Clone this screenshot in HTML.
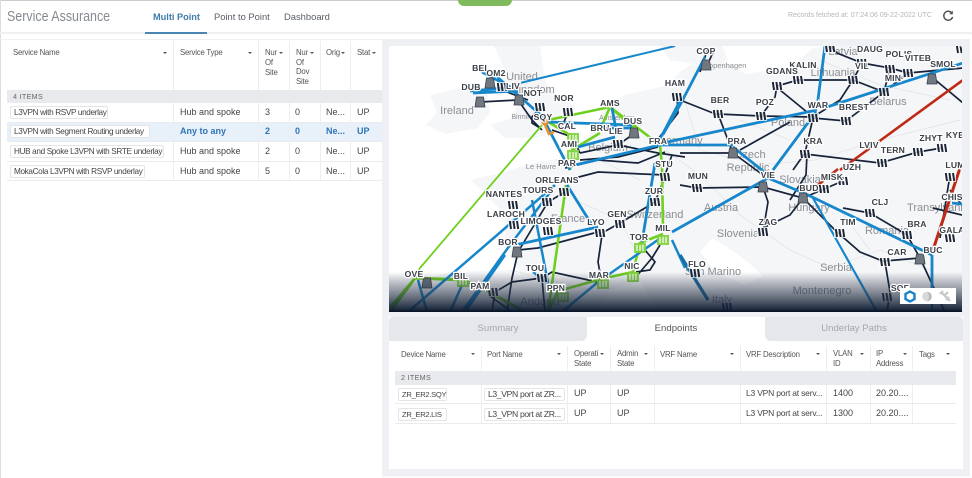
<!DOCTYPE html>
<html><head><meta charset="utf-8"><style>
html,body{margin:0;padding:0;background:#fff}
#p{position:relative;width:972px;height:478px;overflow:hidden;background:#fff;font-family:"Liberation Sans",sans-serif;color:#444;filter:blur(.35px)}
#p div{position:absolute;box-sizing:border-box}
.t{white-space:nowrap;font-size:7.8px;letter-spacing:-.2px;line-height:10px;color:#555}
.c{white-space:nowrap;font-size:9px;line-height:12px;color:#444}
.v{width:1px;background:#eceef0}
.h{height:1px;background:#e9ebee}
.pl{border:1px solid #e4e5e7;border-radius:2px;background:#fff;height:13px;font-size:8.2px;letter-spacing:-.35px;line-height:11px;padding-left:3px;white-space:nowrap;color:#444}
.a{width:0;height:0;border-left:2.5px solid transparent;border-right:2.5px solid transparent;border-top:2.5px solid #555}
.b{color:#2f75b5;font-weight:bold}
svg text{font-family:"Liberation Sans",sans-serif}
.l text{font-size:8.6px;font-weight:bold;fill:#3a3f47;stroke:#fff;stroke-width:2.4px;paint-order:stroke;text-anchor:middle;letter-spacing:.2px}
.g text{font-size:11px;fill:#8a8d92;text-anchor:middle}
</style></head><body><div id="p">
<div style="left:0;top:0;width:972px;height:1px;background:#ccc"></div>
<div style="left:0;top:0;width:1px;height:478px;background:#ddd"></div>
<div style="left:458px;top:0;width:54px;height:6px;background:#7fbb5c;border-radius:0 0 6px 6px"></div>
<div style="left:7px;top:7px;font-size:15px;line-height:20px;color:#868b91;white-space:nowrap;transform:scaleX(.83);transform-origin:0 0">Service Assurance</div>
<div style="left:153px;top:11px;font-size:9.2px;line-height:12px;font-weight:bold;color:#3f7cac;white-space:nowrap">Multi Point</div>
<div style="left:214px;top:11px;font-size:9.4px;line-height:12px;color:#5a6068;white-space:nowrap">Point to Point</div>
<div style="left:284px;top:11px;font-size:9.4px;line-height:12px;color:#5a6068;white-space:nowrap">Dashboard</div>
<div style="left:788px;top:11px;font-size:7px;line-height:10px;color:#b3b6ba;white-space:nowrap">Records fetched at: 07:24:06 09-22-2022 UTC</div>
<svg style="position:absolute;left:941px;top:9px" width="14" height="14" viewBox="0 0 14 14"><path d="M11 4.2A4.5 4.5 0 1 0 11.6 8" fill="none" stroke="#4a4f55" stroke-width="1.4"/><path d="M11.8 1.6V5.2H8.2Z" fill="#4a4f55"/></svg>
<div style="left:0;top:32px;width:972px;height:2px;background:#eff0f2"></div>
<div style="left:145px;top:32px;width:62px;height:1.5px;background:#4a86b4"></div>
<div style="left:0;top:39px;width:382px;height:1px;background:#eef0f3"></div>

<!-- left table -->
<div class="t" style="left:13px;top:48px">Service Name</div>
<div class="t" style="left:180px;top:48px">Service Type</div>
<div class="t" style="left:265px;top:48px;line-height:10px">Nur<br>Of<br>Site</div>
<div class="t" style="left:296px;top:48px;line-height:9.7px">Nur<br>Of<br>Dov<br>Site</div>
<div class="t" style="left:326px;top:48px">Orig</div>
<div class="t" style="left:357px;top:48px">Stat</div>
<div class="a" style="left:163px;top:52px"></div><div class="a" style="left:248px;top:52px"></div>
<div class="a" style="left:279px;top:52px"></div><div class="a" style="left:310px;top:52px"></div>
<div class="a" style="left:341px;top:52px"></div><div class="a" style="left:372px;top:52px"></div>
<div style="left:7px;top:122px;width:375px;height:20px;background:#e8f1fa"></div>
<div class="h" style="left:7px;top:122px;width:375px"></div><div class="h" style="left:7px;top:141px;width:375px"></div><div class="h" style="left:7px;top:161px;width:375px"></div><div class="h" style="left:7px;top:180px;width:375px"></div>
<div class="v" style="left:173px;top:41px;height:140px"></div><div class="v" style="left:258px;top:41px;height:140px"></div><div class="v" style="left:289px;top:41px;height:140px"></div><div class="v" style="left:320px;top:41px;height:140px"></div><div class="v" style="left:350px;top:41px;height:140px"></div>
<div style="left:7px;top:90px;width:375px;height:13px;background:#e9eaed"></div>
<div style="left:13px;top:92px;font-size:7.2px;line-height:10px;color:#666;letter-spacing:.3px">4 ITEMS</div>
<div class="pl" style="left:10px;top:106px;width:98px">L3VPN with RSVP underlay</div>
<div class="pl" style="left:10px;top:125px;width:140px">L3VPN with Segment Routing underlay</div>
<div class="pl" style="left:10px;top:145px;width:154px">HUB and Spoke L3VPN with SRTE underlay</div>
<div class="pl" style="left:10px;top:165px;width:135px">MokaCola L3VPN with RSVP underlay</div>
<div class="c" style="left:180px;top:106px">Hub and spoke</div><div class="c" style="left:265px;top:106px">3</div><div class="c" style="left:295px;top:106px">0</div><div class="c" style="left:326px;top:106px">Ne...</div><div class="c" style="left:357px;top:106px">UP</div>
<div class="c b" style="left:180px;top:125px">Any to any</div><div class="c b" style="left:265px;top:125px">2</div><div class="c b" style="left:295px;top:125px">0</div><div class="c b" style="left:326px;top:125px">Ne...</div><div class="c b" style="left:357px;top:125px">UP</div>
<div class="c" style="left:180px;top:145px">Hub and spoke</div><div class="c" style="left:265px;top:145px">2</div><div class="c" style="left:295px;top:145px">0</div><div class="c" style="left:326px;top:145px">Ne...</div><div class="c" style="left:357px;top:145px">UP</div>
<div class="c" style="left:180px;top:165px">Hub and spoke</div><div class="c" style="left:265px;top:165px">5</div><div class="c" style="left:295px;top:165px">0</div><div class="c" style="left:326px;top:165px">Ne...</div><div class="c" style="left:357px;top:165px">UP</div>

<!-- right panel -->
<div style="left:382px;top:39px;width:590px;height:439px;background:#eff0f4"></div>
<div style="left:970px;top:39px;width:2px;height:439px;background:#fff"></div>
<div style="left:382px;top:476px;width:590px;height:2px;background:#fafafa"></div>

<svg style="position:absolute;left:0;top:0" width="972" height="478" viewBox="0 0 972 478">
<defs>
<clipPath id="m"><path d="M389 49Q389 46 392 46H959Q962 46 962 49V312H389Z"/></clipPath>
<linearGradient id="fd" x1="0" y1="0" x2="0" y2="1"><stop offset="0" stop-color="#0c1a30" stop-opacity="0"/><stop offset=".45" stop-color="#2a3548" stop-opacity=".5"/><stop offset="1" stop-color="#0b1a30" stop-opacity="1"/></linearGradient>
<g id="n"><rect x="-6" y="-5" width="12" height="10" fill="#fff" opacity=".75"/><path d="M-4.2 -4L-3 4M-.6 -4L.6 4M3 -4L4.2 4" stroke="#1d2636" stroke-width="2" fill="none"/></g>
<g id="gr"><path d="M-3.5 -5H3.5L5 5H-5Z" fill="#70777f" stroke="#39414c" stroke-width=".8"/></g>
<g id="gn"><rect x="-6" y="-5" width="12" height="10" fill="#7ed13a" opacity=".9"/><path d="M-3 -3V3M0 -3V3M3 -3V3" stroke="#fff" stroke-width="1.2"/></g>
</defs>
<g clip-path="url(#m)">
<rect x="389" y="46" width="573" height="266" fill="#fff"/>
<g fill="#f5f6f8">
<path d="M430 95L470 86L487 92L490 112L478 128L445 134L426 125L437 112Z"/>
<path d="M494 46L540 46L545 80L552 92L575 106L572 122L556 133L535 138L505 138L490 125L512 118L520 100L500 90L505 70Z"/>
<path d="M960 46L962 46V312H389V312L404 286L450 272L510 270L520 275L505 240L505 215L482 190L470 180L505 172L525 165L560 158L590 135L605 108L625 95L665 86L680 72L690 65L722 60L745 74L790 68L805 55L815 46H960Z"/>
<path d="M660 46H722L728 60L700 65L670 60Z"/>
</g>
<path d="M712 238Q738 252 763 276L745 285L715 272L700 252Z" fill="#fff"/>
<path d="M600 312L610 290L640 282L660 312Z" fill="#fff"/>
<path d="M800 50L830 46H724L728 60L780 62Z" fill="#fff"/>
<g fill="none" stroke="#e2e4e8" stroke-width=".8">
<path d="M665 150L700 175L740 215L790 250L830 268L880 250L930 270M680 85L700 150L760 165L815 160L880 140L960 120M820 60L880 85L950 100M840 210L870 250M575 200L620 220L640 260M510 270L590 290M740 120L790 140M600 160L640 180"/>
</g>
<g class="g">
<text x="457" y="114" style="font-size:11px">Ireland</text><text x="522" y="80" style="font-size:11px">United</text><text x="533" y="93" style="font-size:11px">Kingdom</text>
<text x="843" y="55" style="font-size:11px">Latvia</text><text x="833" y="76" style="font-size:11px">Lithuania</text><text x="888" y="105" style="font-size:11px">Belarus</text><text x="788" y="126" style="font-size:11px">Poland</text>
<text x="750" y="158" style="font-size:11px">Czech</text><text x="748" y="171" style="font-size:11px">Republic</text><text x="721" y="211" style="font-size:11px">Austria</text><text x="738" y="237" style="font-size:11px">Slovenia</text><text x="713" y="275" style="font-size:11px">San Marino</text><text x="836" y="271" style="font-size:11px">Serbia</text><text x="822" y="294" style="font-size:11px">Montenegro</text><text x="809" y="211" style="font-size:11px">Hungary</text><text x="800" y="183" style="font-size:11px">Slovakia</text><text x="887" y="234" style="font-size:11px">Romania</text><text x="938" y="211" style="font-size:11px">Transylvania</text>
<text x="608" y="151" style="font-size:11px">Belgium</text><text x="568" y="222" style="font-size:11px">France</text><text x="655" y="218" style="font-size:11px">Switzerland</text><text x="540" y="305" style="font-size:11px">Andorra</text><text x="680" y="144" style="font-size:11px">Germany</text><text x="722" y="303" style="font-size:11px">Italy</text>
<text x="530" y="119" style="font-size:7px">Birmingham</text><text x="541" y="169" style="font-size:7.5px">Le Havre</text><text x="725" y="68" style="font-size:7.5px">Copenhagen</text><text x="617" y="120" style="font-size:7px">Amsterdam</text>
</g>
<!-- navy links -->
<g fill="none" stroke="#16233a" stroke-width="1.7">
<path d="M718 114L761 116L813 117M777 86L798 80L853 80L884 92L908 73L963 68M777 86L775 97L761 116M780 90L813 117M853 80L840 100L813 117M813 118L846 121L884 92M884 92L890 68L862 63L837 53L830 46M853 80L862 63M908 73L890 68M933 78L963 103M813 118L805 153L793 170M805 154L880 163L918 152L942 148M807 154L806 175L790 200M790 122L740 150M718 114L733 153M718 115L680 100M680 153L733 153M733 153L763 175"/>
<path d="M680 185L697 188L763 187L803 198L837 232L860 252L885 262L890 292L887 312M803 198L790 215L763 228M763 187L768 202L763 232M824 189L803 198M843 181L824 189M843 208L870 213L907 235L920 258M920 258L885 261M920 258L945 312M950 175L940 238M933 208L962 215M950 190L962 205"/>
<path d="M518 252L548 202L565 192M518 252L512 278L507 312M518 250L538 248L598 232M602 235L598 262L602 283M602 233L620 223L655 202L665 177M542 278L552 272L602 283M542 278L545 312M542 278L512 282L495 292L492 312M635 278L652 258L660 245M636 272L650 270L655 262L645 250"/>
<path d="M575 178L598 172L665 175L672 155M518 100L480 102M518 100L532 120L542 130M507 92L528 100M540 108L532 117L532 123L540 128M568 112L562 127M552 130L572 137L580 153M580 153L618 145L635 133M580 160L618 157L658 147M677 97L678 113L655 143M618 145L658 153L685 157M565 168L598 160L638 163L665 152M708 48L700 72M715 48L705 70M490 296L512 312"/>
</g>
<!-- green links -->
<g fill="none" stroke="#6fd01f" stroke-linejoin="round">
<path stroke-width="1.8" d="M542 125L420 268L413 280L390 307"/>
<path stroke-width="2.6" d="M548 120L610 107L660 145L662 165L663 228M610 107L600 130M545 120L570 135L572 150L570 170M566 185L548 312M663 234L640 243L633 272L605 278L558 291L548 312M572 150L600 133M610 107L634 128"/>
<path stroke-width="3" d="M390 312L415 278L463 280L482 288L525 312"/>
</g>
<!-- blue links -->
<g fill="none" stroke="#1787cc" stroke-width="2.8">
<path stroke-width="2" d="M520 83L675 46"/>
<path d="M496 76L543 117M482 72L512 88M470 91L517 87M473 93L518 91M545 122L570 170M548 122L632 125M612 108L617 135M578 147L615 137M600 128L632 128M575 165L660 145"/>
<path d="M658 144L817 110M658 145L733 145M682 97L658 143M705 57L680 105L658 143M733 147L768 175M816 112L773 170M825 46L817 107M827 107L963 63M655 163L642 242M672 232L768 178M768 178L808 195L932 255M932 255V290"/>
<path stroke-width="2.2" d="M813 198L877 312M932 255V312"/>
<path d="M952 203L962 204M515 245L598 227M567 185L592 225"/>
<path stroke-width="2.5" d="M555 185L408 312M552 190L510 245L462 312M505 255L465 312M533 272L548 283M548 283L532 200M598 282L562 312M608 275L662 237M672 240L685 268M680 255L708 300M418 280L427 312M462 285L450 312"/>
</g>
<path d="M680 255L708 300" stroke="#176ea8" stroke-width="3.2" fill="none"/>
<!-- red -->
<g fill="none" stroke="#bf2a17" stroke-width="2.6"><path d="M963 80L840 170"/><path d="M838 169L818 185"/><path stroke-width="3" d="M960 168L933 250"/></g>
<!-- nodes -->
<use href="#gr" x="480" y="102"/><use href="#gr" x="490" y="83"/><use href="#n" x="502" y="87"/><use href="#gr" x="519" y="100"/><use href="#n" x="540" y="107"/><use href="#n" x="568" y="112"/><use href="#gn" x="573" y="138"/><use href="#n" x="618" y="144"/><use href="#n" x="677" y="97"/><use href="#gr" x="634" y="133"/><use href="#gn" x="573" y="155"/><use href="#gr" x="706" y="65"/><use href="#n" x="718" y="114"/><use href="#n" x="761" y="116"/><use href="#n" x="777" y="86"/><use href="#n" x="798" y="80"/><use href="#n" x="853" y="80"/><use href="#n" x="862" y="63"/><use href="#n" x="890" y="69"/><use href="#n" x="908" y="73"/><use href="#n" x="884" y="92"/><use href="#gr" x="932" y="79"/><use href="#n" x="813" y="118"/><use href="#n" x="846" y="121"/><use href="#n" x="805" y="154"/><use href="#gr" x="733" y="153"/><use href="#n" x="830" y="48"/><use href="#n" x="882" y="163"/><use href="#n" x="918" y="152"/><use href="#n" x="942" y="148"/><use href="#n" x="961" y="49"/><use href="#n" x="513" y="205"/><use href="#n" x="514" y="225"/><use href="#gr" x="517" y="252"/><use href="#n" x="564" y="192"/><use href="#n" x="547" y="202"/><use href="#n" x="548" y="231"/><use href="#n" x="600" y="233"/><use href="#n" x="620" y="224"/><use href="#n" x="655" y="202"/><use href="#n" x="665" y="177"/><use href="#gn" x="640" y="248"/><use href="#gn" x="663" y="240"/><use href="#gn" x="633" y="277"/><use href="#gn" x="603" y="284"/><use href="#gn" x="563" y="297"/><use href="#n" x="542" y="278"/><use href="#gr" x="427" y="283"/><use href="#gn" x="463" y="282"/><use href="#n" x="493" y="292"/><use href="#n" x="697" y="188"/><use href="#gr" x="763" y="187"/><use href="#gr" x="803" y="198"/><use href="#n" x="824" y="189"/><use href="#n" x="843" y="181"/><use href="#n" x="870" y="213"/><use href="#n" x="907" y="235"/><use href="#n" x="840" y="233"/><use href="#n" x="763" y="232"/><use href="#n" x="885" y="262"/><use href="#gr" x="920" y="259"/><use href="#n" x="950" y="238"/><use href="#n" x="950" y="177"/><use href="#n" x="887" y="297"/><use href="#n" x="695" y="273"/><use href="#n" x="727" y="307"/>
<circle cx="545" cy="122" r="3.5" fill="#e8912d"/><path d="M545 125L549 134L554 132" stroke="#e8912d" stroke-width="2.5" fill="none"/>
<rect x="389" y="272" width="573" height="40" fill="url(#fd)"/>
<!-- labels -->
<g class="l">
<text x="481" y="71">BEL</text><text x="496" y="76">OM2</text><text x="513" y="89">LIV</text><text x="533" y="96">NOT</text><text x="471" y="90">DUB</text><text x="564" y="101">NOR</text><text x="543" y="120">SQY</text><text x="610" y="106">AMS</text><text x="567" y="129">CAL</text><text x="600" y="131">BRU</text><text x="616" y="134">LIE</text><text x="633" y="124">DUS</text><text x="658" y="144">FRA</text><text x="569" y="147">AMI</text><text x="567" y="166">PAR</text><text x="664" y="167">STU</text><text x="675" y="86">HAM</text>
<text x="706" y="54">COP</text><text x="803" y="68">KALIN</text><text x="782" y="74">GDANS</text><text x="870" y="52">DAUG</text><text x="899" y="57">POLIS</text><text x="918" y="61">VITEB</text><text x="943" y="67">SMOL</text><text x="955" y="138">KYE</text><text x="862" y="69">VIL</text><text x="893" y="81">MIN</text><text x="720" y="103">BER</text><text x="765" y="105">POZ</text><text x="818" y="108">WAR</text><text x="854" y="110">BREST</text><text x="737" y="144">PRA</text><text x="813" y="144">KRA</text><text x="869" y="148">LVIV</text><text x="893" y="153">TERN</text><text x="931" y="141">ZHYT</text><text x="852" y="170">UZH</text><text x="955" y="168">LUM</text>
<text x="557" y="183">ORLEANS</text><text x="504" y="197">NANTES</text><text x="538" y="193">TOURS</text><text x="506" y="217">LAROCH</text><text x="541" y="224">LIMOGES</text><text x="508" y="245">BOR</text><text x="596" y="225">LYO</text><text x="617" y="217">GEN</text><text x="654" y="194">ZUR</text><text x="639" y="240">TOR</text><text x="663" y="231">MIL</text><text x="632" y="269">NIC</text><text x="599" y="278">MAR</text><text x="535" y="271">TOU</text><text x="556" y="291">PPN</text><text x="480" y="289">PAM</text><text x="461" y="279">BIL</text><text x="414" y="277">OVE</text>
<text x="768" y="178">VIE</text><text x="698" y="179">MUN</text><text x="832" y="180">MISK</text><text x="809" y="191">BUD</text><text x="880" y="205">CLJ</text><text x="768" y="225">ZAG</text><text x="848" y="225">TIM</text><text x="917" y="227">BRA</text><text x="952" y="233">GALA</text><text x="952" y="200">CHIS</text><text x="933" y="253">BUC</text><text x="897" y="255">CAR</text><text x="697" y="267">FLO</text><text x="900" y="291">SOF</text>
</g>
<rect x="389" y="310.5" width="573" height="1.5" fill="#0a1527"/>
</g>
<!-- map controls -->
<rect x="900" y="288" width="56" height="16" fill="#fff"/>
<path d="M910 291.5L914.5 294V299L910 301.5L905.5 299V294Z" fill="none" stroke="#1a82c8" stroke-width="2.4"/>
<circle cx="927" cy="296.5" r="4.8" fill="#d8d9db"/><path d="M927 291.7A4.8 4.8 0 0 1 927 301.3A7 7 0 0 0 927 291.7Z" fill="#bbb"/>
<path d="M941 292L950 301M944 296L948 292M946 300L949 297M940 294L943 291" stroke="#c6c7c9" stroke-width="2.2" fill="none"/>
</svg>

<!-- lower panel -->
<div style="left:389px;top:317px;width:574px;height:152px;background:#fff"></div>
<div style="left:389px;top:317px;width:198px;height:24px;background:#e6e7ea;border-radius:4px 0 6px 0"></div>
<div style="left:765px;top:317px;width:198px;height:24px;background:#e6e7ea;border-radius:0 4px 0 6px"></div>
<div style="left:587px;top:317px;width:178px;height:24px;background:#fff;border-radius:6px 6px 0 0"></div>
<div style="left:389px;top:323px;width:218px;text-align:center;font-size:9.6px;line-height:12px;color:#a4a6aa">Summary</div>
<div style="left:587px;top:323px;width:178px;text-align:center;font-size:9.6px;line-height:12px;color:#555">Endpoints</div>
<div style="left:765px;top:323px;width:178px;text-align:center;font-size:9.6px;line-height:12px;color:#a4a6aa">Underlay Paths</div>

<div class="t" style="left:401px;top:350px">Device Name</div><div class="t" style="left:487px;top:350px">Port Name</div>
<div class="t" style="left:574px;top:349px">Operati<br>State</div><div class="t" style="left:617px;top:349px">Admin<br>State</div>
<div class="t" style="left:660px;top:350px">VRF Name</div><div class="t" style="left:746px;top:350px">VRF Description</div>
<div class="t" style="left:833px;top:349px">VLAN<br>ID</div><div class="t" style="left:876px;top:349px">IP<br>Address</div><div class="t" style="left:919px;top:350px">Tags</div>
<div class="a" style="left:471px;top:353px"></div><div class="a" style="left:557px;top:353px"></div><div class="a" style="left:600px;top:353px"></div><div class="a" style="left:644px;top:353px"></div><div class="a" style="left:730px;top:353px"></div><div class="a" style="left:816px;top:353px"></div><div class="a" style="left:860px;top:353px"></div><div class="a" style="left:903px;top:353px"></div><div class="a" style="left:946px;top:353px"></div>
<div class="v" style="left:481px;top:346px;height:78px"></div><div class="v" style="left:567px;top:346px;height:78px"></div><div class="v" style="left:610px;top:346px;height:78px"></div><div class="v" style="left:654px;top:346px;height:78px"></div><div class="v" style="left:740px;top:346px;height:78px"></div><div class="v" style="left:826px;top:346px;height:78px"></div><div class="v" style="left:870px;top:346px;height:78px"></div><div class="v" style="left:912px;top:346px;height:78px"></div>
<div style="left:395px;top:371px;width:561px;height:14px;background:#e9eaed"></div>
<div style="left:401px;top:373px;font-size:7.2px;line-height:10px;color:#666;letter-spacing:.3px">2 ITEMS</div>
<div class="h" style="left:395px;top:403px;width:561px"></div><div class="h" style="left:395px;top:423px;width:561px"></div>
<div class="pl" style="left:398px;top:388px;width:49px;font-size:7.6px;letter-spacing:-.3px">ZR_ER2.SQY</div><div class="pl" style="left:484px;top:388px;width:81px;font-size:8.6px">L3_VPN port at ZR...</div>
<div class="c" style="left:574px;top:387px">UP</div><div class="c" style="left:617px;top:387px">UP</div><div class="c" style="left:746px;top:387px;font-size:8.5px;letter-spacing:-.2px">L3 VPN port at serv...</div><div class="c" style="left:833px;top:387px">1400</div><div class="c" style="left:876px;top:387px">20.20....</div>
<div class="pl" style="left:398px;top:408px;width:49px;font-size:7.6px;letter-spacing:-.3px">ZR_ER2.LIS</div><div class="pl" style="left:484px;top:408px;width:81px;font-size:8.6px">L3_VPN port at ZR...</div>
<div class="c" style="left:574px;top:407px">UP</div><div class="c" style="left:617px;top:407px">UP</div><div class="c" style="left:746px;top:407px;font-size:8.5px;letter-spacing:-.2px">L3 VPN port at serv...</div><div class="c" style="left:833px;top:407px">1300</div><div class="c" style="left:876px;top:407px">20.20....</div>
</div></body></html>
